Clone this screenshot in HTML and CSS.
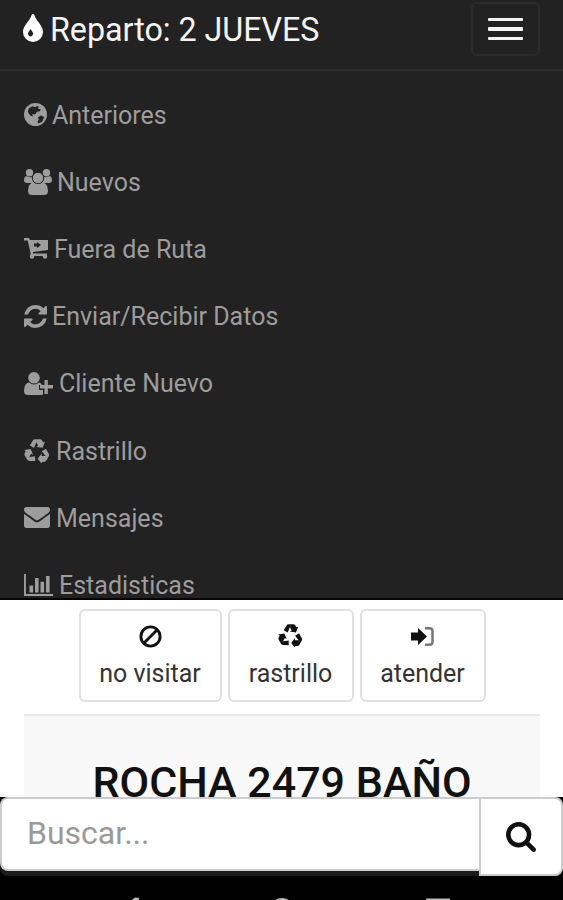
FILE: index.html
```html
<!DOCTYPE html>
<html lang="es">
<head>
<meta charset="utf-8">
<title>Reparto</title>
<link rel="stylesheet" href="styles.css">
</head>
<body>
<svg class="defs" width="0" height="0">
  <defs>
    <g id="arm"><path d="M5.300 7.200 8 2.700Q8.800 1.300 10.300 1.300h2.200L9.300 9.400Z"/><path d="M12.400 1.300h2.300q1.400 0 2.200 1.300l1 1.700 1.700-.9-2.300 5.800-6-.8 1.900-1.100-2-3.500Z"/></g>
    <symbol id="recycle" viewBox="0 1 24 22.500"><use href="#arm"/><use href="#arm" transform="rotate(120 12 13)"/><use href="#arm" transform="rotate(240 12 13)"/></symbol>
  </defs>
</svg>
<header class="navbar">
  <a class="brand"><svg class="drop" viewBox="0 0 20 28"><path fill-rule="evenodd" d="M10 0c.7 0 1.2.4 1.4 1.1C13 7 20 11.700 20 18a10 10 0 0 1-20 0C0 11.700 7 7 8.600 1.100 8.800.4 9.300 0 10 0ZM7.500 15 5.600 18a2.600 2.600 0 1 0 3.900 0Z"/></svg><span>Reparto: 2 JUEVES</span></a>
  <button class="toggle" aria-label="Menu"><i></i><i></i><i></i></button>
</header>
<nav class="menu">
  <a><svg width="23" height="23" viewBox="0 0 24 24"><circle cx="12" cy="12" r="12"/><path class="cut" d="M5 5.500 9 3.500l2.500 1 2-1.500 2 1-1 2 3 .5-1 2-3 .5-2 3-3-.5 1 2.500-3-1-2.500-4Zm9.500 9.500 3-2 3.500 1.500-2 5-4 2-1-2 1.500-2Z"/></svg><span>Anteriores</span></a>
  <a><svg width="28" height="26" viewBox="0 0 28 26"><circle cx="5.500" cy="3.700" r="3.700"/><circle cx="22.500" cy="3.700" r="3.700"/><path d="M2 7q4 2 6.500.5 0 4 2 6.500H3q-3 0-3-3 0-3 2-4Zm24 0q-4 2-6.500.5 0 4-2 6.500H25q3 0 3-3 0-3-2-4Z"/><circle class="ring" cx="14" cy="9" r="5.700"/><path d="M9.500 13.500q4.500 3 9 0 5.500.5 5.500 8.500 0 4-4 4H8q-4 0-4-4 0-8 5.500-8.500Z"/></svg><span>Nuevos</span></a>
  <a class="cart"><svg width="24" height="21" viewBox="0 0 24 21"><path d="M0 0h4.800L6 2h18v10L9 14v1.600h14V18H6.500v-3L3.700 2.500H0Z"/><circle cx="8" cy="18.500" r="2.200"/><circle cx="21" cy="18.500" r="2.200"/><path class="cut" d="M10 5.500h3v-1.500l4 3-4 3V8.500h-3Z"/></svg><span>Fuera de Ruta</span></a>
  <a><svg width="23" height="23" viewBox="128 128 1536 1536"><path d="M1639 1056q0 5-1 7-64 268-268 434.500t-478 166.500q-146 0-282.500-55t-243.500-157l-129 129q-19 19-45 19t-45-19-19-45v-448q0-26 19-45t45-19h448q26 0 45 19t19 45-19 45l-137 137q71 66 161 102t187 36q134 0 250-65t186-179q11-17 53-117 8-23 30-23h192q13 0 22.500 9.500t9.500 22.500zm25-800v448q0 26-19 45t-45 19h-448q-26 0-45-19t-19-45 19-45l138-138q-148-137-349-137-134 0-250 65t-186 179q-11 17-53 117-8 23-30 23h-199q-13 0-22.500-9.500t-9.500-22.500v-7q65-268 270-434.500t480-166.500q146 0 284 55.500t245 156.500l130-129q19-19 45-19t45 19 19 45z"/></svg><span>Enviar/Recibir Datos</span></a>
  <a class="wide"><svg width="29" height="23" viewBox="0 0 29 23"><circle cx="10" cy="5.800" r="5.800"/><path d="M5 10.500q5 4 10 0 2 .3 3 2.500h-3v5h4v4.500q-.5.500-2 .5H4q-4 0-4-4 0-8 5-8.500ZM20.500 8h3.300v5H29v3.600h-5.200V22h-3.300v-5.400H16V13h4.500Z"/></svg><span>Cliente Nuevo</span></a>
  <a class="wide"><svg width="26" height="24"><use href="#recycle"/></svg><span>Rastrillo</span></a>
  <a class="wide"><svg width="26" height="21" viewBox="0 256 1792 1408" preserveAspectRatio="none"><path d="M1792 710v794q0 66-47 113t-113 47h-1472q-66 0-113-47t-47-113v-794q44 49 101 87 362 246 497 345 57 42 92.500 65.500t94.500 48 110 24.500h2q51 0 110-24.500t94.500-48 92.500-65.500q170-123 498-345 57-39 100-87zm0-294q0 79-49 151t-122 123q-376 261-468 325-10 7-42.500 31t-54 38.500-52 32.500-57.500 27-50 9h-2q-23 0-50-9t-57.500-27-52-32.500-54-38.500-42.500-31q-91-64-262-182.500t-205-142.500q-62-42-117-115.500t-55-136.500q0-78 41.500-130t118.500-52h1472q65 0 112.500 47t47.500 113z"/></svg><span>Mensajes</span></a>
  <a class="wide"><svg width="29" height="22" viewBox="0 0 29 22"><path d="M0 0h1.900v20H29v2H0ZM5.500 11.500h3.600v7H5.500ZM11 4h3.600v14.500H11Zm5.500 3.700h3.600v10.800h-3.600ZM22 2h3.600v16.500H22Z"/></svg><span>Estadisticas</span></a>
</nav>
<main class="content">
  <div class="actions">
    <button class="b1"><svg width="23" height="23" viewBox="0 0 24 24"><g class="line"><circle cx="12" cy="12" r="10"/><path d="M19 5 5 19"/></g></svg><span>no visitar</span></button>
    <button class="b2"><svg width="25" height="23"><use href="#recycle" y="6" height="23"/></svg><span>rastrillo</span></button>
    <button class="b3"><svg width="23" height="20" viewBox="0 0 23 20"><path d="M0 6h7V1.500L16 10l-9 8.500V14H0Z"/><path class="door" d="M14 1.700h4.500q3 0 3 3v10.600q0 3-3 3H14"/></svg><span>atender</span></button>
  </div>
  <section class="client"><h1>ROCHA 2479 BAÑO</h1></section>
</main>
<form class="search">
  <input type="text" placeholder="Buscar..." aria-label="Buscar">
  <button type="button" aria-label="Buscar"><svg width="30" height="30" viewBox="64 128 1664 1664"><path d="M1216 832q0-185-131.500-316.500t-316.500-131.500-316.500 131.500-131.500 316.500 131.500 316.500 316.500 131.500 316.500-131.500 131.500-316.500zm512 832q0 52-38 90t-90 38q-54 0-90-38l-343-342q-179 124-399 124-143 0-273.500-55.500t-225-150-150-225-55.500-273.500 55.500-273.500 150-225 225-150 273.500-55.500 273.500 55.500 225 150 150 225 55.500 273.500q0 220-124 399l343 343q37 37 37 90z"/></svg></button>
</form>
<footer class="system">
  <svg width="563" height="24" viewBox="0 0 563 24"><path d="M135 21.500 120 34l19 12V22Z"/><circle cx="282" cy="34" r="12"/><path d="M426 22.500h24v22h-24Z"/></svg>
</footer>
</body>
</html>
```
FILE: styles.css
```css
* { box-sizing: border-box; }
body {
  margin: 0;
  height: 900px;
  display: flex;
  flex-direction: column;
  overflow: hidden;
  background: #000;
  font-family: Roboto, "Liberation Sans", sans-serif;
}
.defs { position: absolute; }
svg { display: block; flex: none; fill: currentColor; }
button { font: inherit; color: inherit; }

.navbar {
  flex: none;
  height: 71px;
  padding: 2px 23px 0;
  display: flex;
  justify-content: space-between;
  align-items: flex-start;
  background: #222;
  border-bottom: 2px solid #2e2e2e;
}
.brand {
  display: flex;
  align-items: center;
  height: 56px;
  gap: 7px;
  color: #f4f4f4;
  font-size: 32.300px;
  letter-spacing: -0.050px;
  white-space: nowrap;
}
.drop { width: 20px; height: 28px; margin-bottom: 4px; color: #fff; }
.toggle {
  width: 69px;
  height: 54px;
  padding: 0;
  display: flex;
  flex-direction: column;
  align-items: center;
  justify-content: center;
  gap: 6px;
  background: none;
  border: 2px solid #2b2b2b;
  border-radius: 6px;
}
.toggle i { width: 35px; height: 3.500px; background: #f4f4f4; border-radius: 1px; }

.menu {
  flex: none;
  height: 529px;
  padding: 10px 24px 0;
  overflow: hidden;
  background: #222;
  border-bottom: 2px solid #050505;
  color: #9d9d9d;
}
.menu a {
  display: flex;
  align-items: center;
  gap: 5px;
  height: 67.200px;
  font-size: 25px;
  white-space: nowrap;
}
.menu .wide { gap: 6px; }
.menu .cart { gap: 6px; }
.menu span { padding-top: 1px; }
.cut { fill: #222; }
.ring { stroke: #222; stroke-width: 1; }

.content { flex: none; height: 197px; padding: 9px 23px 0 24px; background: #fff; overflow: hidden; }
.actions { display: flex; justify-content: center; gap: 6px; height: 105px; }
.actions button {
  height: 93px;
  padding: 7px 0 0;
  display: flex;
  flex-direction: column;
  align-items: center;
  background: #fff;
  border: 2px solid #e0e0e0;
  border-radius: 6px;
  color: #111;
  font-size: 25px;
}
.actions svg { height: 37px; }
.actions span { color: #333; line-height: 37px; }
.b1 { width: 143px; }
.b2, .b3 { width: 126px; }
.line { fill: none; stroke: #111; stroke-width: 3; }
.door { fill: none; stroke: #777; stroke-width: 2.500; }
.client { height: 120px; background: #f8f8f8; border-top: 2px solid #e7e7e7; }
.client h1 {
  margin: 0;
  padding-top: 40px;
  color: #111;
  font-size: 43px;
  font-weight: 500;
  line-height: 52px;
  text-align: center;
  white-space: nowrap;
}

.search { flex: none; height: 79px; display: flex; align-items: flex-start; }
.search input {
  width: 479px;
  height: 74px;
  padding: 0 25px 2px;
  border: 2px solid #ccc;
  border-right: 0;
  border-radius: 8px 0 0 8px;
  outline: 0;
  background: #fff;
  box-shadow: 0 5px 0 #1c1c1c;
  font: 32px Roboto, sans-serif;
}
.search input::placeholder { color: #999; opacity: 1; }
.search button {
  width: 84px;
  height: 79px;
  padding: 0;
  display: flex;
  align-items: center;
  justify-content: center;
  background: #fff;
  border: 2px solid #ccc;
  border-radius: 0 8px 8px 0;
  color: #111;
}
.system { flex: none; height: 24px; color: #bbb; overflow: hidden; }
```
